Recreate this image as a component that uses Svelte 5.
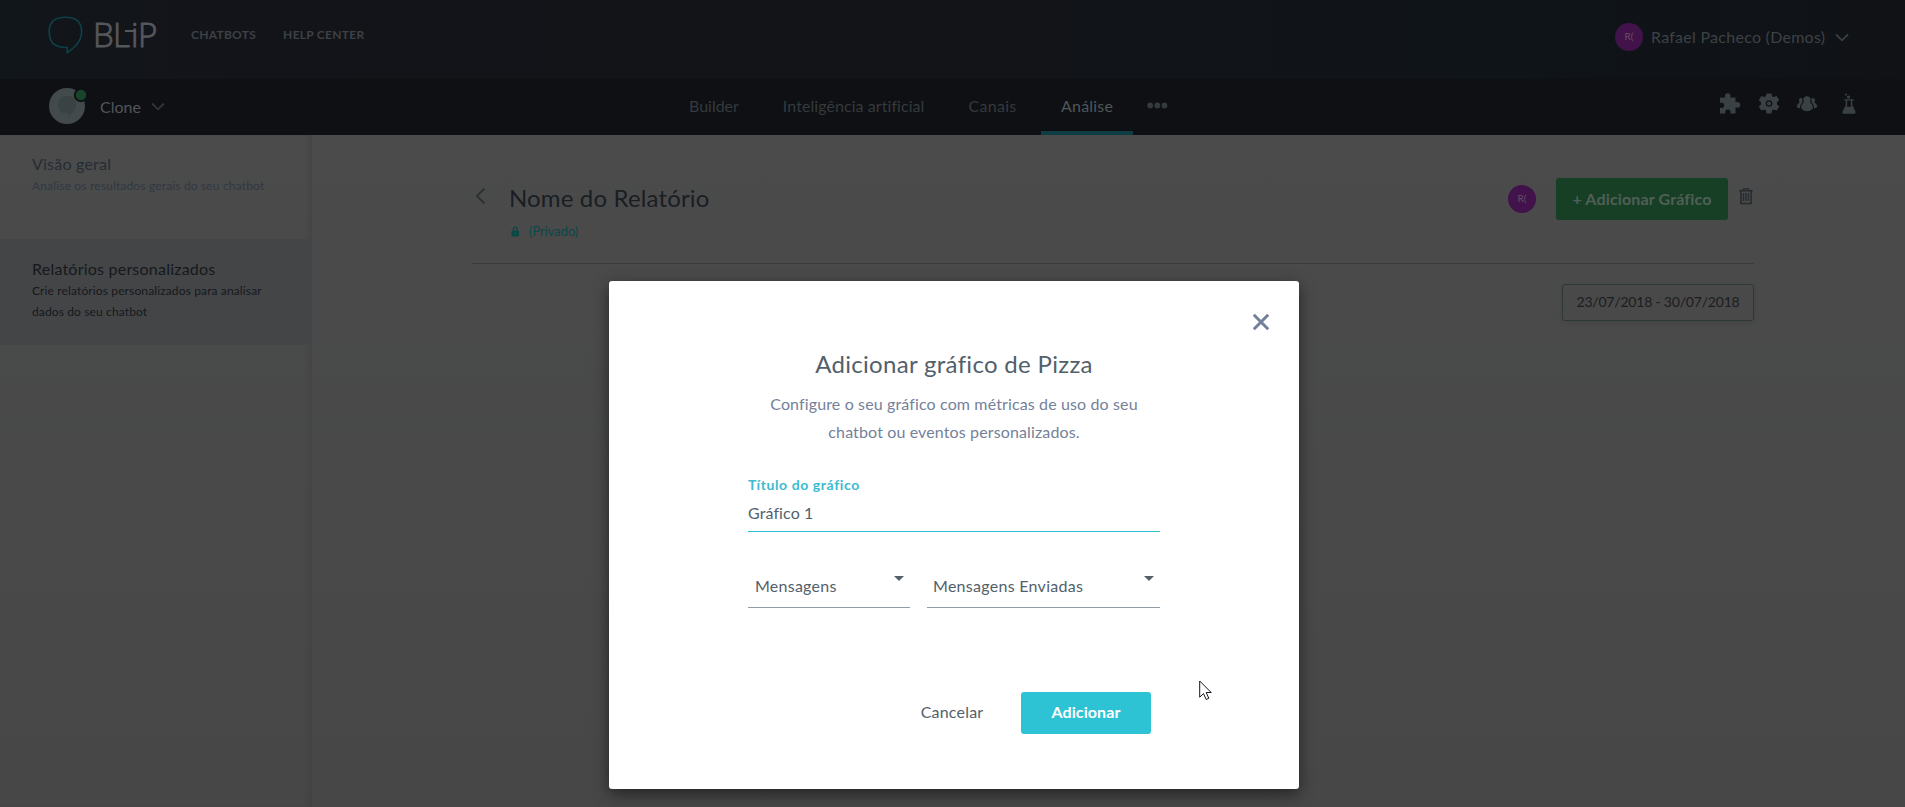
<script>
  const tabs = [
    { label: 'Builder', ls: -0.02, gap: 44 },
    { label: 'Inteligência artificial', ls: 0.07, gap: 44 },
    { label: 'Canais', ls: 0.3, gap: 24.5 },
    { label: 'Análise', ls: 0.2, gap: 0, active: true }
  ];
  let title = $state('Gráfico 1');
</script>

<div class="page">
  <header class="top">
    <svg class="bubble" width="36" height="40" viewBox="0 0 36 40" fill="none" stroke="#0d4147" stroke-width="1.6" stroke-linejoin="round">
      <path d="M17.500 1.200C7 1.200 1.200 5.500 1.200 15.500C1.200 26.500 6 31.500 19.200 31.500V37C24 33 33.600 27 33.600 15.500C33.600 5.500 28 1.200 17.500 1.200Z" />
    </svg>
    <div class="word"><span>B</span><span>L</span><span class="i">i</span><span>P</span></div>
    <nav class="links"><span>CHATBOTS</span><span>HELP CENTER</span></nav>
    <div class="user">
      <span class="initials">R(</span>
      <span class="username">Rafael Pacheco (Demos)</span>
      <svg width="14" height="9" viewBox="0 0 14 9" fill="none" stroke="#3a3f43" stroke-width="1.8"><path d="M1 1.500 7 7.300 13 1.500" /></svg>
    </div>
  </header>

  <div class="sub">
    <div class="bot">
      <svg width="38" height="38" viewBox="0 0 38 38">
        <circle cx="18" cy="20" r="18" fill="#434a4c" />
        <path d="M18 10C12 10 9 13 9 18.500C9 24.500 12 27.500 19 27.500V30.500C22 28 27 25 27 18.500C27 13 24 10 18 10Z" fill="#3a4244" />
        <circle cx="32" cy="9" r="7.200" fill="#0f1013" /><circle cx="32" cy="9" r="5.200" fill="#18452a" />
      </svg>
      <span>Clone</span>
      <svg class="chev" width="14" height="9" viewBox="0 0 14 9" fill="none" stroke="#30363a" stroke-width="1.8"><path d="M1 1.500 7 7.300 13 1.500" /></svg>
    </div>
    <nav class="tabs">
      {#each tabs as t}
        <span class="tab" class:active={t.active} style:letter-spacing="{t.ls}px" style:margin-right="{t.gap}px">{t.label}</span>
      {/each}
      <svg class="dots" width="21" height="7" viewBox="0 0 21 7" fill="#343a3d"><circle cx="3.200" cy="3.500" r="2.900" /><circle cx="10.300" cy="3.500" r="2.900" /><circle cx="17.400" cy="3.500" r="2.900" /></svg>
    </nav>
    <div class="tools">
      <svg width="22" height="22" viewBox="0 0 22 22"><path d="M1 4.500H6.300C5.300 2 6.700 .3 8.700 .3S12.200 2 11.200 4.500H16.500V9.500C19 8.300 21.300 9.500 21.300 11.900S19 15.500 16.500 14.300V20.500H11.300C12.300 18 10.900 16.400 8.900 16.400S5.500 18 6.500 20.500H1V14.700C3.600 15.700 5.200 14.300 5.200 12.300S3.600 9 1 10Z" /></svg>
      <svg width="22" height="22" viewBox="0 0 22 22"><path fill-rule="evenodd" d="M8.500 .5H13.500L14 3.200 15.700 4.100 18.700 3.100 21.200 7.300 19 9.200V11.600L21.200 13.400 18.700 17.600 15.700 16.600 14 17.600 13.500 20.500H8.500L8 17.600 6.300 16.600 3.300 17.600 .8 13.400 3 11.600V9.200L.8 7.300 3.300 3.100 6.300 4.100 8 3.200ZM11 7.200A3.300 3.300 0 1 0 11 13.800A3.300 3.300 0 1 0 11 7.200ZM11 8.500A2 2 0 1 1 11 12.500A2 2 0 1 1 11 8.500Z" /></svg>
      <svg width="22" height="22" viewBox="0 0 22 22"><path d="M11 3.200C13.200 3.200 14.800 4.600 14.700 6.500C14.600 8 14.200 8.900 13.900 9.300C15.700 10.300 16.800 12 16.800 15.300C15.300 17.300 13.500 18.200 11 18.200S6.700 17.300 5.200 15.300C5.200 12 6.300 10.300 8.100 9.300C7.800 8.900 7.400 8 7.300 6.500C7.200 4.600 8.800 3.200 11 3.200Z" /><path d="M6.400 5.300C5 4.300 2.900 5.200 3 7.300C3.100 8.600 3.500 9.200 3.500 9.800C1.700 10.700 .8 12 .8 14.200L4 15.500C4 12.500 5 10.400 6.700 9.200C6.300 8.200 6 6.700 6.400 5.300ZM15.600 5.300C17 4.300 19.100 5.200 19 7.300C18.900 8.600 18.500 9.200 18.500 9.800C20.300 10.700 21.200 12 21.200 14.200L18 15.500C18 12.500 17 10.400 15.300 9.200C15.700 8.200 16 6.700 15.600 5.300Z" /></svg>
      <svg class="flask" width="16" height="22" viewBox="0 0 16 22"><path fill-rule="evenodd" d="M3.300 6.200H12.600V7.500H11.300V12.300L14.500 18.500Q15 20.700 13.500 20.700H2.500Q1 20.700 1.500 18.500L4.700 12.300V7.500H3.300ZM6.200 7.500V12.800L5.700 13.800H10.300L9.800 12.800V7.500Z" /><circle cx="5" cy="1.500" r="1.100" /><circle cx="7.500" cy="4" r="1.600" /></svg>
    </div>
  </div>

  <div class="body">
    <aside>
      <div class="item"><h4>Visão geral</h4><p class="s1">Analise os resultados gerais do seu chatbot</p></div>
      <div class="item on"><h4>Relatórios personalizados</h4><p>Crie relatórios personalizados para analisar<br />dados do seu chatbot</p></div>
    </aside>
    <main>
      <div class="head">
        <svg class="back" width="12" height="18" viewBox="0 0 12 18" fill="none" stroke="#2c3335" stroke-width="2.200"><path d="M9.500 1.500 2 9 9.500 16.500" /></svg>
        <div class="names">
          <h1>Nome do Relatório</h1>
          <div class="private">
            <svg width="9" height="11" viewBox="0 0 9 11"><rect x=".5" y="4.500" width="7.500" height="6" rx="1" fill="#084744" /><path d="M2.300 5V3.200a1.950 2 0 0 1 3.900 0V5" fill="none" stroke="#084744" stroke-width="1.200" /><rect x="3.800" y="6.500" width="1" height="2" fill="#3b4b4b" /></svg>
            <span>(Privado)</span>
          </div>
        </div>
        <span class="initials owner">R(</span>
        <button class="add">+ Adicionar Gráfico</button>
        <svg class="trash" width="14" height="17" viewBox="0 0 14 17" fill="none" stroke="#262b2f"><path d="M4.500 2V.8H9.500V2" stroke-width="1.300" /><path d="M.3 2.700H13.700" stroke-width="1.600" /><path d="M1.900 3V15.400H12.100V3" stroke-width="1.500" /><path d="M4.500 5V13M7 5V13M9.500 5V13" stroke-width="1.400" /></svg>
      </div>
      <div class="dates">23/07/2018 - 30/07/2018</div>
    </main>
  </div>

  <div class="overlay">
    <div class="modal">
      <svg class="close" width="18" height="18" viewBox="0 0 18 18" fill="none" stroke="#72809b" stroke-width="3"><path d="M1.800 1.800 16.200 16.200M16.200 1.800 1.800 16.200" /></svg>
      <h2>Adicionar gráfico de Pizza</h2>
      <p class="desc">Configure o seu gráfico com métricas de uso do seu<br />chatbot ou eventos personalizados.</p>
      <label for="chart-title">Título do gráfico</label>
      <input id="chart-title" bind:value={title} />
      <div class="selects">
        <div class="select a"><span>Mensagens</span><i></i></div>
        <div class="select b"><span>Mensagens Enviadas</span><i></i></div>
      </div>
      <div class="actions"><button class="cancel">Cancelar</button><button class="ok">Adicionar</button></div>
    </div>
  </div>
  <svg class="cursor" width="14" height="21" viewBox="0 0 14 21"><path d="M.7 1V17.200L4.500 13.600 7.200 19.500 9.800 18.300 7.200 12.500H12.200Z" fill="#fff" stroke="#15151f" stroke-width="1" /></svg>
</div>

<style>
  :global(body) { overflow: hidden; }
  .page { position: relative; width: 1905px; height: 807px; display: flex; flex-direction: column; overflow: hidden; font-family: Lato, 'Open Sans', sans-serif; font-size: 16px; background: linear-gradient(#4b4c4b, #4a4a4b 30%, #484948 65%, #464746); }
  h1, h2, h4, p { margin: 0; font-weight: 400; }
  svg { flex: none; display: block; }
  button { border: 0; padding: 0; font: inherit; }
  .top { height: 79px; flex: none; display: flex; align-items: flex-start; background: linear-gradient(90deg, #11161b, #131419 12%, #131418 45%, #0f1418 80%, #101216); }
  .bubble { margin: 16px 0 0 48px; }
  .word { display: flex; height: 40px; margin: 15px 0 0 9px; width: 98px; font: 300 33px/40px 'Open Sans', sans-serif; color: #55585a; -webkit-text-stroke: .9px #55585a; }
  .word span:nth-child(1) { width: 20px; }
  .word span:nth-child(2) { width: 18px; }
  .word .i { position: relative; width: 7px; }
  .word .i::before { content: ''; position: absolute; right: 2px; top: 15px; width: 11px; height: 2px; background: #55585a; }
  .links { display: flex; gap: 27px; padding-top: 25px; font-size: 12px; line-height: 20px; font-weight: 700; color: #3c4145; letter-spacing: .27px; }
  .user { display: flex; align-items: center; height: 74px; margin-left: auto; margin-right: 56px; color: #3d4246; }
  .username { width: 184px; margin: -2px 0 0 8px; letter-spacing: .27px; white-space: nowrap; }
  .initials { width: 28px; height: 28px; flex: none; border-radius: 50%; background: #42134a; color: #665069; font-size: 10px; line-height: 27px; text-align: center; }
  .sub { height: 56px; flex: none; display: grid; grid-template-columns: 689px 1fr 240px; background: #0f1013; }
  .bot { display: flex; align-items: center; padding-left: 49px; color: #51565a; }
  .bot > svg:first-child { margin-top: -4px; }
  .bot span { width: 51px; margin: -2px 0 0 13px; }
  .chev { margin-top: -1px; }
  .tabs { display: flex; align-items: center; color: #343a3f; line-height: 54px; white-space: nowrap; }
  .tab { height: 56px; }
  .tab.active { color: #50565a; width: 92px; text-align: center; box-shadow: inset 0 -4px #0e3e43; }
  .dots { margin: -3px 0 0 14px; }
  .tools { display: flex; gap: 16.500px; padding: 14px 0 0 54px; fill: #3a4144; }
  .flask { margin-left: 6px; }
  .body { flex: 1; display: flex; min-height: 0; }
  aside { width: 312px; flex: none; box-shadow: inset -6px 0 6px -4px rgba(0,0,0,.1); color: #252d34; }
  .item { box-sizing: border-box; height: 104px; padding: 18px 0 0 32px; }
  .item.on { height: 106px; padding-top: 19px; background: #444546; color: #15191d; }
  .item h4 { font-size: 16px; line-height: 22px; letter-spacing: .22px; }
  .item p { font-size: 12px; line-height: 21px; letter-spacing: .13px; white-space: nowrap; }
  .item .s1 { color: #303842; letter-spacing: .16px; }
  main { width: 1282px; margin-left: 160px; display: flex; flex-direction: column; }
  .head { height: 128px; flex: none; display: flex; align-items: flex-start; border-bottom: 1px solid #393c3e; }
  .back { margin: 52px 0 0 3px; }
  .names { flex: 1; margin: 48px 0 0 22px; }
  h1 { font-size: 24px; line-height: 30px; letter-spacing: .15px; color: #191e23; }
  .private { display: flex; align-items: center; gap: 9px; height: 18px; margin: 9px 0 0 2px; font-size: 13px; letter-spacing: -.06px; color: #0a4745; }
  .owner { margin: 50px 20px 0 0; }
  .add { width: 172px; height: 42px; margin: 43px 11px 0 0; padding-bottom: 2px; border-radius: 3px; background: #173f26; color: #515f56; font-weight: 700; letter-spacing: .15px; }
  .trash { margin: 53px 1px 0 0; }
  .dates { align-self: flex-end; box-sizing: border-box; width: 192px; height: 37px; margin-top: 20px; border: 1px solid #2c3739; border-radius: 3px; background: #4a4949; box-shadow: 0 2px 5px rgba(0,0,0,.09); font-size: 14px; line-height: 34px; text-align: center; letter-spacing: -.2px; color: #191d20; }
  .overlay { position: absolute; inset: 0; display: flex; justify-content: center; align-items: flex-start; padding: 281px 0 0 3px; }
  .modal { position: relative; box-sizing: border-box; width: 690px; height: 508px; padding: 66px 139px 0; background: #fff; border-radius: 3px; box-shadow: 0 5px 15px rgba(0,0,0,.5); color: #52606b; }
  .close { position: absolute; left: 643px; top: 32px; }
  h2 { font-size: 24px; line-height: 34px; text-align: center; letter-spacing: .31px; white-space: nowrap; }
  .desc { margin-top: 9px; line-height: 28px; text-align: center; color: #75819a; letter-spacing: .13px; white-space: nowrap; }
  label { display: block; margin-top: 29px; font-size: 14px; line-height: 20px; font-weight: 700; letter-spacing: .6px; color: #3dbbd0; }
  input { display: block; box-sizing: border-box; width: 412px; height: 37px; padding: 0 0 1px; border: 0; border-bottom: 1px solid #2fbdd0; outline: 0; font: inherit; letter-spacing: .1px; color: #52606b; }
  .selects { display: flex; gap: 17px; margin-top: 36px; }
  .select { box-sizing: border-box; height: 40px; display: flex; justify-content: space-between; border-bottom: 1px solid #909da6; padding: 0 6px 0 7px; line-height: 35px; letter-spacing: .25px; }
  .select.a { width: 162px; }
  .select.b { width: 233px; padding-left: 6px; letter-spacing: .28px; }
  .select i { width: 0; height: 0; margin-top: 8px; border: 5.500px solid transparent; border-top-color: #52606b; border-bottom: 0; }
  .actions { display: flex; align-items: center; justify-content: flex-end; gap: 36px; margin: 84px 9px 0 0; }
  .cancel { background: none; color: #52606b; width: 66px; padding-bottom: 3px; letter-spacing: .2px; }
  .ok { width: 130px; height: 42px; padding-bottom: 3px; border-radius: 3px; background: #2dc3d5; color: #fff; font-weight: 700; letter-spacing: .1px; }
  .cursor { position: absolute; left: 1199px; top: 680px; }
</style>
